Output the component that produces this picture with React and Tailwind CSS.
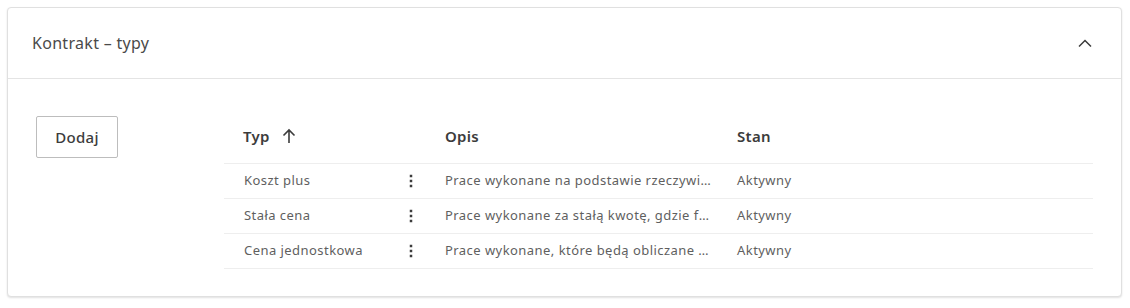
import React from "react";

const rows = [
  { typ: "Koszt plus", opis: "Prace wykonane na podstawie rzeczywistych kosztów powiększonych o marżę", stan: "Aktywny" },
  { typ: "Stała cena", opis: "Prace wykonane za stałą kwotę, gdzie fakturowanie następuje etapami", stan: "Aktywny" },
  { typ: "Cena jednostkowa", opis: "Prace wykonane, które będą obliczane na podstawie ceny jednostkowej", stan: "Aktywny" },
];

function Dots() {
  return (
    <svg width="4" height="16" viewBox="0 0 4 16" className="text-[#3c3c3c]">
      <rect x="0.75" y="1.75" width="2.5" height="2.5" fill="currentColor" />
      <rect x="0.75" y="6.75" width="2.5" height="2.5" fill="currentColor" />
      <rect x="0.75" y="11.75" width="2.5" height="2.5" fill="currentColor" />
    </svg>
  );
}

export default function App() {
  return (
    <div className="bg-white w-[1130px] h-[308px] pt-[7px] pl-[7px] pr-[8px]" style={{ fontFamily: '"Noto Sans", "Open Sans", sans-serif' }}>
      <div className="border border-[#e0e0e0] rounded-[4px] bg-white shadow-[0_1px_2px_rgba(0,0,0,0.12)] h-[290px]">
        <div className="h-[71px] border-b border-[#e4e4e4] flex items-center justify-between pl-[24px] pr-[29px]">
          <span className="text-[16px] tracking-[0.3px] text-[#4a4a4a]">Kontrakt – typy</span>
          <svg width="14" height="9" viewBox="0 0 14 9" fill="none">
            <path d="M1 7.5 L7 1.5 L13 7.5" stroke="#3c3c3c" strokeWidth="1.5" />
          </svg>
        </div>
        <div className="flex pt-[37px] pl-[28px] pr-[28px]">
          <button className="w-[82px] h-[42px] border border-[#bdbdbd] rounded-[2px] text-[15px] tracking-[0.3px] font-medium text-[#3c3c3c] flex items-center justify-center shrink-0">
            Dodaj
          </button>
          <div className="ml-[106px] flex-1">
            <div className="grid grid-cols-[169px_36px_293px_1fr] h-[48px] border-b border-[#eeeeee] items-center pb-[7px] text-[15px] tracking-[0.3px] font-semibold text-[#3c3c3c]">
              <div className="pl-[19px] flex items-center gap-[12px]">
                <span>Typ</span>
                <svg width="14" height="16" viewBox="0 0 14 16" fill="none">
                  <path d="M7 15 V2 M1.5 7.5 L7 2 L12.5 7.5" stroke="#3c3c3c" strokeWidth="1.6" />
                </svg>
              </div>
              <div />
              <div className="pl-[16px]">Opis</div>
              <div className="pl-[15px]">Stan</div>
            </div>
            {rows.map((r) => (
              <div key={r.typ} className="grid grid-cols-[169px_36px_293px_1fr] h-[35px] border-b border-[#eeeeee] items-center text-[13px] tracking-[0.45px] text-[#5f5f5f]">
                <div className="pl-[20px] truncate">{r.typ}</div>
                <div className="flex justify-center"><Dots /></div>
                <div className="pl-[16px] pr-[10px] truncate">{r.opis}</div>
                <div className="pl-[15px]">{r.stan}</div>
              </div>
            ))}
          </div>
        </div>
      </div>
    </div>
  );
}
